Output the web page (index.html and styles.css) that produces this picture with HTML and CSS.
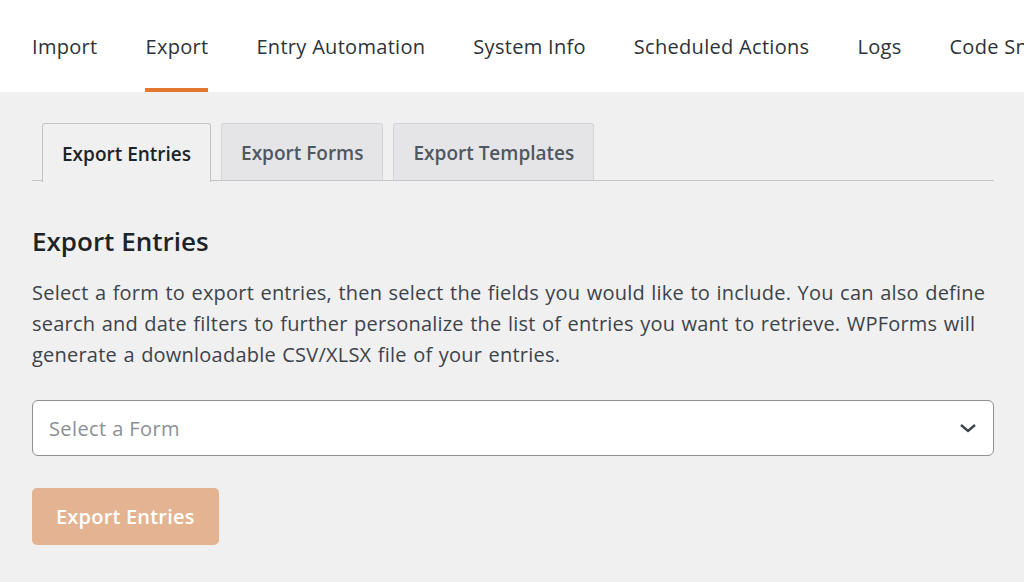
FILE: index.html
```html
<!DOCTYPE html>
<html lang="en">
<head>
<meta charset="UTF-8">
<meta name="viewport" content="width=device-width, initial-scale=1.0">
<title>Tools - Export</title>
<link rel="stylesheet" href="styles.css">
</head>
<body>
    <!-- Top tools navigation -->
    <div class="topnav">
        <a href="#">Import</a>
        <a href="#" class="active">Export</a>
        <a href="#">Entry Automation</a>
        <a href="#">System Info</a>
        <a href="#">Scheduled Actions</a>
        <a href="#">Logs</a>
        <a href="#">Code Snippets</a>
    </div>

    <div class="content">
        <!-- Sub tabs -->
        <div class="subtabs">
            <a href="#" class="tab current">Export Entries</a>
            <a href="#" class="tab">Export Forms</a>
            <a href="#" class="tab">Export Templates</a>
        </div>

        <h2>Export Entries</h2>
        <p class="intro">Select a form to export entries, then select the fields you would like to include. You can also define search and date filters to further personalize the list of entries you want to retrieve. WPForms will generate a downloadable CSV/XLSX file of your entries.</p>

        <div class="select-box">
            <span>Select a Form</span>
            <svg width="20" height="12" viewBox="0 0 20 12"><path d="M3 3 L10 9 L17 3" fill="none" stroke="#3c434a" stroke-width="2.4"/></svg>
        </div>

        <button class="export-btn">Export Entries</button>
    </div>
</body>
</html>
```

FILE: styles.css
```css
/* General formatting */
body {
    font-family: "Open Sans", "Noto Sans", sans-serif;
    background-color: #f0f0f1;
    color: #3c434a;
    margin: 0;
    padding: 0;
}

/* Top navigation */
.topnav {
    background-color: #ffffff;
    height: 92px;
    display: flex;
    align-items: stretch;
    padding-left: 32px;
    white-space: nowrap;
    overflow: hidden;
}

.topnav a {
    display: flex;
    align-items: center;
    padding: 4px 0 0;
    margin-right: 48px;
    color: #2c3338;
    text-decoration: none;
    font-size: 20px;
    letter-spacing: 0.3px;
    border-bottom: 4px solid transparent;
}

.topnav a.active {
    border-bottom-color: #e27730;
}

.content {
    padding: 31px 30px 0 32px;
}

/* Sub tabs */
.subtabs {
    display: flex;
    gap: 10px;
    padding-left: 10px;
    border-bottom: 1px solid #c3c4c7;
    height: 57px;
}

.tab {
    display: flex;
    align-items: center;
    padding: 2px 19px 0;
    background-color: #e5e5e7;
    border: 1px solid #d4d5d8;
    border-bottom: none;
    border-radius: 3px 3px 0 0;
    color: #50575e;
    text-decoration: none;
    font-size: 19px;
    font-weight: 600;
}

.tab.current {
    background-color: #f0f0f1;
    border-color: #c3c4c7;
    color: #1d2327;
    height: 56px;
}

h2 {
    font-size: 26px;
    font-weight: 600;
    color: #1d2327;
    margin: 42px 0 18px;
}

.intro {
    font-size: 20px;
    line-height: 31px;
    letter-spacing: 0.22px;
    word-spacing: 1px;
    margin: 0 0 30px;
}

.select-box {
    display: flex;
    align-items: center;
    justify-content: space-between;
    height: 54px;
    background-color: #ffffff;
    border: 1px solid #8c8f94;
    border-radius: 6px;
    padding: 0 15px 0 16px;
    font-size: 20px;
    letter-spacing: 0.4px;
    color: #8c8f94;
}

.export-btn {
    margin-top: 32px;
    height: 57px;
    padding: 0 24px;
    background-color: #e4b492;
    color: #ffffff;
    border: none;
    border-radius: 5px;
    font-family: inherit;
    font-size: 20px;
    font-weight: 600;
    letter-spacing: 0.2px;
}
```
